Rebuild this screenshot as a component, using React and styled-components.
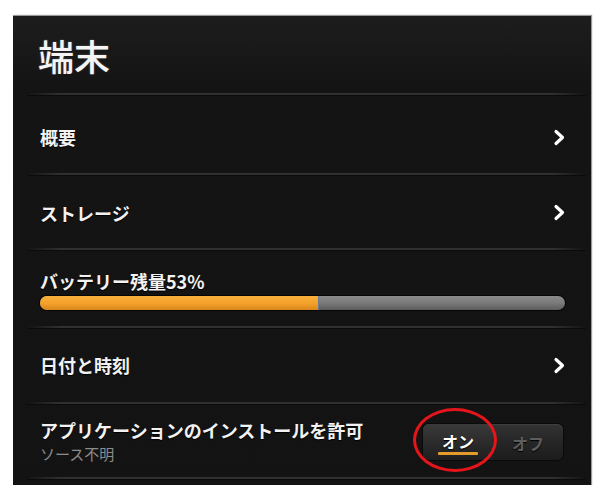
import React from "react";
import styled, { createGlobalStyle } from "styled-components";

const GlobalStyle = createGlobalStyle`
  html, body {
    margin: 0;
    padding: 0;
    background: #ffffff;
  }
  body {
    font-family: "Noto Sans CJK JP", "Noto Sans", sans-serif;
  }
`;

const Panel = styled.div`
  width: 578px;
  margin: 15px 0 0 13px;
  padding-bottom: 6px;
  background: linear-gradient(to bottom, #1d1d1d 0px, #141414 70px, #131313 100%);
  border-top: 1px solid #9a9a9a;
  box-shadow: 1px 0 1px rgba(0, 0, 0, 0.4);
  box-sizing: border-box;
`;

const Header = styled.div`
  height: 77px;
  display: flex;
  align-items: center;
  padding-left: 25px;
`;

const Title = styled.h1`
  margin: 0;
  font-size: 36px;
  font-weight: 500;
  color: #f4f4f4;
  line-height: 1;
  text-shadow: 0 0 2px rgba(255, 255, 255, 0.35), 0 1px 1px #000;
`;

const Separator = styled.div`
  height: 2px;
  margin: 0 5px 0 14px;
  background: linear-gradient(
    to right,
    rgba(44, 44, 44, 0) 0%,
    #303030 6%,
    #303030 94%,
    rgba(44, 44, 44, 0) 100%
  );
  box-shadow: 0 1px 0 #0b0b0b;
`;

const Row = styled.div`
  height: ${(p) => p.$h}px;
  box-sizing: border-box;
  padding: ${(p) => p.$top || 0}px ${(p) => p.$right || 19}px 0 13px;
  margin: 0 5px 0 14px;
  display: flex;
  align-items: center;
  justify-content: space-between;
`;

const Label = styled.span`
  display: block;
  font-size: 18px;
  font-weight: 700;
  color: #f2f2f2;
  line-height: 22px;
  text-shadow: 0 1px 1px #000;
`;

const TextStack = styled.div`
  display: flex;
  flex-direction: column;
  gap: 4px;
`;

const SubLabel = styled.span`
  display: block;
  font-size: 15px;
  font-weight: 400;
  color: #8c8c8c;
  line-height: 18px;
`;

const BatteryRow = styled.div`
  height: 76px;
  box-sizing: border-box;
  padding: 20px 21px 0 13px;
  margin: 0 5px 0 14px;
  display: flex;
  flex-direction: column;
  gap: 4px;
`;

const Bar = styled.div`
  height: 14px;
  border-radius: 7px;
  background: linear-gradient(to bottom, #8a8a8a 0%, #7a7a7a 50%, #5c5c5c 100%);
  box-shadow: 0 0 0 1px #050505;
  overflow: hidden;
`;

const Fill = styled.div`
  height: 100%;
  background: linear-gradient(to bottom, #f8b03a 0%, #f3a02a 55%, #d9861b 100%);
  border-right: 1px solid #6a7a90;
`;

const Chevron = () => (
  <svg width="15" height="17" viewBox="0 0 15 17">
    <polyline
      points="4,2.5 10.5,8.5 4,14.5"
      fill="none"
      stroke="#ffffff"
      strokeWidth="3.2"
      strokeLinecap="round"
      strokeLinejoin="round"
    />
  </svg>
);

const ToggleWrap = styled.div`
  position: relative;
  display: flex;
  width: 140px;
  height: 36px;
  border-radius: 6px;
  background: linear-gradient(to bottom, #333333 0%, #262626 50%, #1c1c1c 100%);
  box-shadow: 0 0 0 1px #0a0a0a, inset 0 1px 0 #3e3e3e;
  margin-top: 2px;
`;

const Segment = styled.div`
  flex: 1;
  display: flex;
  flex-direction: column;
  align-items: center;
  justify-content: center;
  font-size: 16px;
  font-weight: 700;
  color: ${(p) => (p.$active ? "#ffffff" : "#5e5e5e")};
  border-radius: ${(p) => (p.$active ? "6px 0 0 6px" : "0 6px 6px 0")};
  background: ${(p) =>
    p.$active
      ? "linear-gradient(to bottom, #3a3a3a 0%, #2a2a2a 55%, #1e1e1e 100%)"
      : "transparent"};
  text-shadow: 0 1px 1px #000;
`;

const Underline = styled.div`
  width: 40px;
  height: 3px;
  margin-top: 2px;
  background: #e39b2c;
  border-radius: 1px;
`;

const SegmentText = styled.span`
  line-height: 18px;
  margin-top: 3px;
`;

const Circle = styled.div`
  position: absolute;
  left: -10px;
  top: -16px;
  width: 84px;
  height: 64px;
  box-sizing: border-box;
  border: 3px solid #e4151b;
  border-radius: 50%;
  pointer-events: none;
`;

const items = [
  { label: "概要", h: 78, top: 6 },
  { label: "ストレージ", h: 73, top: 2 },
];

export default function App() {
  const battery = 53;
  return (
    <>
      <GlobalStyle />
      <Panel>
        <Header>
          <Title>端末</Title>
        </Header>
        <Separator />
        {items.map((it) => (
          <React.Fragment key={it.label}>
            <Row $h={it.h} $top={it.top}>
              <Label>{it.label}</Label>
              <Chevron />
            </Row>
            <Separator />
          </React.Fragment>
        ))}
        <BatteryRow>
          <Label>バッテリー残量{battery}%</Label>
          <Bar>
            <Fill style={{ width: `${battery}%` }} />
          </Bar>
        </BatteryRow>
        <Separator />
        <Row $h={74}>
          <Label>日付と時刻</Label>
          <Chevron />
        </Row>
        <Separator />
        <Row $h={73} $right={23}>
          <TextStack>
            <Label>アプリケーションのインストールを許可</Label>
            <SubLabel>ソース不明</SubLabel>
          </TextStack>
          <ToggleWrap>
            <Segment $active>
              <SegmentText>オン</SegmentText>
              <Underline />
            </Segment>
            <Segment>
              <SegmentText>オフ</SegmentText>
            </Segment>
            <Circle />
          </ToggleWrap>
        </Row>
        <Separator />
      </Panel>
    </>
  );
}
